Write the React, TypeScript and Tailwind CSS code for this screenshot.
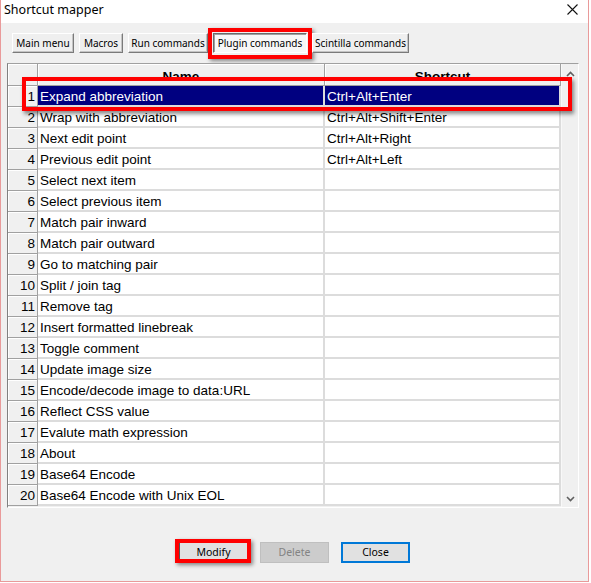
import React from 'react'

const rows: [string, string][] = [
    ['Expand abbreviation', 'Ctrl+Alt+Enter'],
    ['Wrap with abbreviation', 'Ctrl+Alt+Shift+Enter'],
    ['Next edit point', 'Ctrl+Alt+Right'],
    ['Previous edit point', 'Ctrl+Alt+Left'],
    ['Select next item', ''],
    ['Select previous item', ''],
    ['Match pair inward', ''],
    ['Match pair outward', ''],
    ['Go to matching pair', ''],
    ['Split / join tag', ''],
    ['Remove tag', ''],
    ['Insert formatted linebreak', ''],
    ['Toggle comment', ''],
    ['Update image size', ''],
    ['Encode/decode image to data:URL', ''],
    ['Reflect CSS value', ''],
    ['Evalute math expression', ''],
    ['About', ''],
    ['Base64 Encode', ''],
    ['Base64 Encode with Unix EOL', ''],
]

const tabs = [
    { label: 'Main menu', w: 'w-[62px]' },
    { label: 'Macros', w: 'w-[44px]' },
    { label: 'Run commands', w: 'w-[80px]' },
    { label: 'Plugin commands', w: 'w-[94px]', active: true },
    { label: 'Scintilla commands', w: 'w-[97px]' },
]

function Chevron({ up }: { up?: boolean }) {
    return (
        <svg width="9" height="6" viewBox="0 0 9 6">
            <path
                d={up ? 'M1 5 L4.5 1.5 L8 5' : 'M1 1 L4.5 4.5 L8 1'}
                fill="none"
                stroke="#606060"
                strokeWidth="1.6"
            />
        </svg>
    )
}

export default function App() {
    return (
        <div className="w-[591px] h-[583px] bg-white font-['Noto_Sans',sans-serif]">
            <div className="w-[589px] h-[582px] flex flex-col border-x border-b border-[#e99a9a]">
                {/* Barra de títol */}
                <div className="h-[23px] bg-white flex items-center justify-between pl-[3px] pr-[10px]">
                    <span className="text-[12.5px] text-black leading-none pb-[2px]">Shortcut mapper</span>
                    <svg width="11" height="11" viewBox="0 0 11 11" className="mb-[4px]">
                        <path d="M0.5 0.5 L10.5 10.5 M10.5 0.5 L0.5 10.5" stroke="#111" strokeWidth="1.1" />
                    </svg>
                </div>

                <div className="flex-1 bg-[#f0f0f0] flex flex-col">
                    {/* Pestanyes */}
                    <div className="flex gap-[5px] pl-[11px] pt-[10px]">
                        {tabs.map((t) => (
                            <div key={t.label} className="relative">
                                <div
                                    className={`${t.w} h-[20px] flex items-center justify-center text-[10px] text-black border ${
                                        t.active
                                            ? 'bg-[#f7f7f7] border-t-[#6b6b6b] border-l-[#6b6b6b] border-r-white border-b-white shadow-[inset_1px_1px_0_#a0a0a0]'
                                            : 'bg-[#efefef] border-t-white border-l-white border-r-[#7a7a7a] border-b-[#7a7a7a] shadow-[inset_-1px_-1px_0_#c4c4c4]'
                                    }`}
                                >
                                    {t.label}
                                </div>
                                {t.active && (
                                    <div className="absolute -left-[5px] -top-[5px] w-[104px] h-[31px] border-[4px] border-[#ff0000] shadow-[2px_2px_4px_rgba(0,0,0,0.45)]" />
                                )}
                            </div>
                        ))}
                    </div>

                    {/* Graella */}
                    <div className="relative ml-[6px] mt-[10px] w-[572px] h-[445px] flex border border-t-[#a0a0a0] border-l-[#808080] border-r-white border-b-white font-['Liberation_Sans',Arial,sans-serif] text-[13.5px] text-black">
                        <div className="flex flex-col w-[553px]">
                            <div className="h-[22px] flex font-bold leading-none">
                                <div className="w-[30px] bg-[#f0f0f0] border-r border-b border-[#a0a0a0] shadow-[inset_1px_1px_0_#fff]" />
                                <div className="w-[287px] bg-[#f0f0f0] border-r border-b border-[#a0a0a0] shadow-[inset_1px_1px_0_#fff] flex justify-center pt-[6px]">
                                    Name
                                </div>
                                <div className="w-[236px] bg-[#f0f0f0] border-r border-b border-[#a0a0a0] shadow-[inset_1px_1px_0_#fff] flex justify-center pt-[6px]">
                                    Shortcut
                                </div>
                            </div>
                            {rows.map(([name, key], i) => {
                                const sel = i === 0
                                return (
                                    <div key={name} className="h-[21px] flex leading-none">
                                        <div className="w-[30px] bg-[#f0f0f0] border-r border-b border-[#a0a0a0] shadow-[inset_1px_1px_0_#fff] flex items-center justify-end pr-[2px] pt-[2px]">
                                            {i + 1}
                                        </div>
                                        <div
                                            className={`w-[287px] border-r-2 border-b-2 border-[#dcdcdc] flex items-center pl-[2px] pt-[2px] ${
                                                sel ? 'bg-[#000080] text-white' : 'bg-white'
                                            }`}
                                        >
                                            {name}
                                        </div>
                                        <div
                                            className={`w-[236px] border-r-2 border-b-2 border-[#dcdcdc] flex items-center pl-[2px] pt-[2px] ${
                                                sel ? 'bg-[#000080] text-white' : 'bg-white'
                                            }`}
                                        >
                                            {key}
                                        </div>
                                    </div>
                                )
                            })}
                        </div>

                        {/* Barra de desplaçament */}
                        <div className="w-[17px] bg-[#f0f0f0] flex flex-col justify-between border-l border-[#f8f8f8]">
                            <div className="h-[17px] flex items-center justify-center pt-[2px]">
                                <Chevron up />
                            </div>
                            <div className="h-[17px] flex items-center justify-center">
                                <Chevron />
                            </div>
                        </div>

                        {/* Marc vermell de la fila 1 */}
                        <div className="absolute left-[14px] top-[13px] w-[550px] h-[34px] border-[4px] border-[#ff0000] shadow-[2px_3px_4px_rgba(0,0,0,0.45)]" />
                    </div>

                    {/* Botons */}
                    <div className="flex justify-center gap-[12px] pt-[34px] text-[10.5px]">
                        <div className="relative">
                            <div className="w-[69px] h-[21px] bg-[#e1e1e1] border border-[#555] flex items-center justify-center text-black">
                                Modify
                            </div>
                            <div className="absolute -left-[4px] -top-[3px] w-[76px] h-[24px] border-[4px] border-[#ff0000] shadow-[2px_2px_4px_rgba(0,0,0,0.45)]" />
                        </div>
                        <div className="w-[69px] h-[21px] bg-[#cccccc] border border-[#bfbfbf] flex items-center justify-center text-[#838383]">
                            Delete
                        </div>
                        <div className="w-[69px] h-[21px] bg-[#e1e1e1] border-2 border-[#0078d7] flex items-center justify-center text-black">
                            Close
                        </div>
                    </div>
                </div>
            </div>
        </div>
    )
}
